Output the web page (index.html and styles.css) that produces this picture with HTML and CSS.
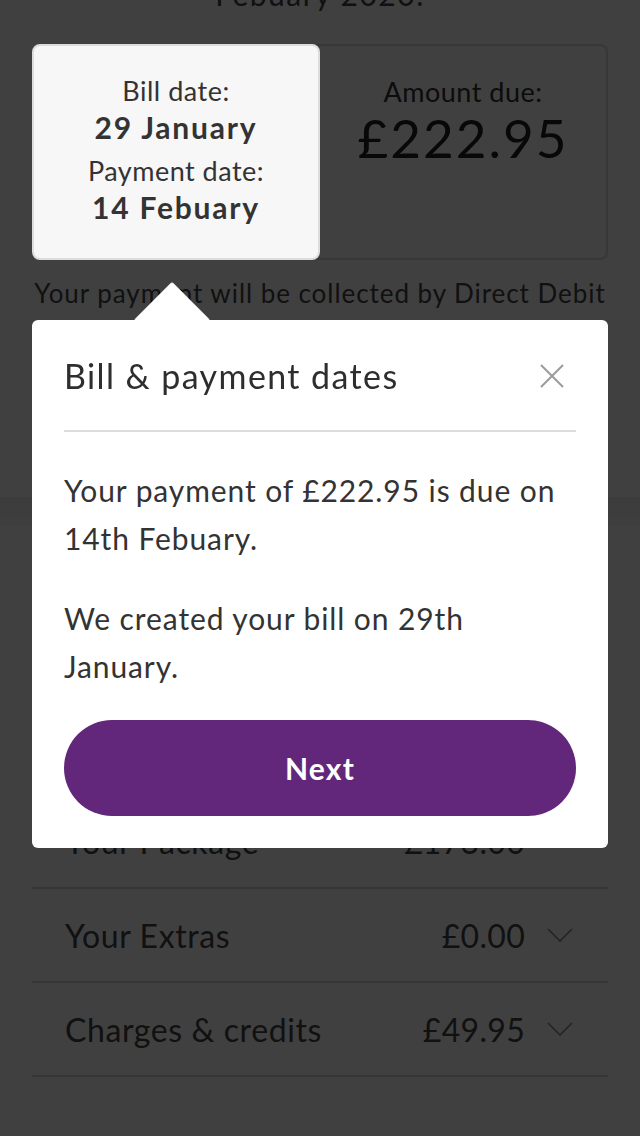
FILE: index.html
```html
<!DOCTYPE html>
<html lang="en">
<head>
<meta charset="utf-8">
<title>Bill & payment dates</title>
<link rel="stylesheet" href="styles.css">
</head>
<body>
<main class="page">
  <p class="intro">Febuary 2020.</p>

  <section class="summary">
    <div class="dates-card">
      <div class="date-group">
        <span class="label">Bill date:</span>
        <strong class="value">29 January</strong>
      </div>
      <div class="date-group">
        <span class="label">Payment date:</span>
        <strong class="value">14 Febuary</strong>
      </div>
    </div>
    <div class="amount-card">
      <span class="label">Amount due:</span>
      <span class="amount">£222.95</span>
    </div>
  </section>

  <p class="collect">Your payment will be collected by Direct Debit</p>

  <div class="band"></div>

  <ul class="rows">
    <li class="row"><span class="row-name">Your Package</span><span class="row-amount">£173.00</span>
      <svg class="chev" viewBox="0 0 26 14" width="26" height="14"><path d="M1 1 L13 13 L25 1" fill="none" stroke="#8a8a8a" stroke-width="1.6"/></svg></li>
    <li class="row"><span class="row-name">Your Extras</span><span class="row-amount">£0.00</span>
      <svg class="chev" viewBox="0 0 26 14" width="26" height="14"><path d="M1 1 L13 13 L25 1" fill="none" stroke="#8a8a8a" stroke-width="1.6"/></svg></li>
    <li class="row"><span class="row-name">Charges &amp; credits</span><span class="row-amount">£49.95</span>
      <svg class="chev" viewBox="0 0 26 14" width="26" height="14"><path d="M1 1 L13 13 L25 1" fill="none" stroke="#8a8a8a" stroke-width="1.6"/></svg></li>
  </ul>
</main>

<div class="overlay"></div>

<div class="popover" role="dialog">
  <div class="pop-head">
    <h2 class="pop-title">Bill &amp; payment dates</h2>
    <svg class="close" viewBox="0 0 24 24" width="24" height="24"><path d="M1 1 L23 23 M23 1 L1 23" stroke="#9b9b9b" stroke-width="2" fill="none"/></svg>
  </div>
  <p class="pop-text">Your payment of £222.95 is due on 14th Febuary.</p>
  <p class="pop-text">We created your bill on 29th January.</p>
  <button class="next">Next</button>
</div>
</body>
</html>
```
FILE: styles.css
```css
* { box-sizing: border-box; }
html, body { margin: 0; padding: 0; }
body {
  background: #ffffff;
  font-family: "Lato", "Liberation Sans", sans-serif;
  color: #333333;
  width: 640px;
  height: 1136px;
  overflow: hidden;
  position: relative;
}
.page { display: flex; flex-direction: column; }
.intro {
  margin: -26px 0 0;
  height: 40px;
  line-height: 40px;
  font-size: 30px;
  letter-spacing: 1.5px;
  text-align: center;
  color: #444;
}
.summary {
  margin: 30px 32px 0;
  height: 216px;
  display: grid;
  grid-template-columns: 286px 1fr;
  border: 2px solid #dcdcdc;
  border-radius: 8px;
}
.dates-card {
  position: relative;
  z-index: 2;
  margin: -2px 0 -2px -2px;
  background: #f7f7f7;
  border: 2px solid #dddddd;
  border-radius: 8px;
  padding-top: 26px;
  display: flex;
  flex-direction: column;
  gap: 6px;
  text-align: center;
}
.date-group { display: flex; flex-direction: column; }
.label { font-size: 27px; line-height: 37px; color: #333; font-weight: 400; letter-spacing: 0.5px; }
.value { font-size: 30px; line-height: 37px; font-weight: 700; color: #333; letter-spacing: 1.8px; }
.amount-card {
  display: flex;
  flex-direction: column;
  align-items: center;
  padding-top: 27px;
}
.amount { font-size: 53px; line-height: 56px; color: #222; letter-spacing: 2px; }
.collect {
  margin: 15px 0 0;
  font-size: 26px;
  line-height: 36px;
  letter-spacing: 0.95px;
  text-align: center;
  color: #444;
}
.band {
  margin-top: 186px;
  height: 28px;
  background: linear-gradient(#eeeeee, #f8f8f8);
}
.rows { list-style: none; margin: 270px 32px 0; padding: 0; }
.row {
  height: 94px;
  display: flex;
  align-items: center;
  border-bottom: 2px solid #d8d8d8;
  padding: 0 35px 0 33px;
  font-size: 32px;
  letter-spacing: 0.6px;
  color: #444;
}
.row-name { flex: 1; }
.row-amount { letter-spacing: 0.3px; }
.chev { margin-left: 22px; }
.overlay {
  position: fixed;
  inset: 0;
  background: rgba(0, 0, 0, 0.75);
  z-index: 1;
}
.popover {
  position: absolute;
  top: 320px;
  left: 32px;
  width: 576px;
  background: #ffffff;
  border-radius: 6px;
  padding: 0 32px 32px;
  z-index: 3;
}
.popover::before {
  content: "";
  position: absolute;
  left: 113px;
  top: -27px;
  width: 54px;
  height: 54px;
  background: #ffffff;
  transform: rotate(45deg);
  border-radius: 2px;
}
.pop-head {
  position: relative;
  display: flex;
  align-items: center;
  justify-content: space-between;
  padding: 32px 0 30px;
  border-bottom: 2px solid #dcdcdc;
}
.pop-title {
  margin: 0;
  font-size: 34px;
  line-height: 48px;
  font-weight: 400;
  letter-spacing: 1.4px;
  color: #2e2e2e;
}
.close { margin-right: 12px; }
.pop-text {
  margin: 34px 0 0;
  padding-right: 10px;
  font-size: 30px;
  line-height: 48px;
  letter-spacing: 0.9px;
  color: #333;
}
.pop-text + .pop-text { margin-top: 32px; }
.next {
  display: block;
  width: 100%;
  height: 96px;
  margin-top: 30px;
  border: 0;
  border-radius: 48px;
  background: #62277a;
  color: #ffffff;
  font-family: inherit;
  font-size: 30px;
  font-weight: 700;
  letter-spacing: 1.2px;
}
```
